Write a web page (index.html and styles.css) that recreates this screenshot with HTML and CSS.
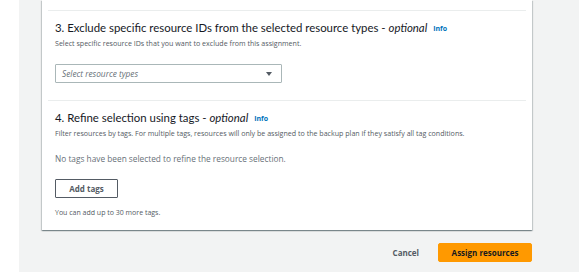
FILE: index.html
```html
<!DOCTYPE html>
<html lang="en">
<head>
<meta charset="UTF-8">
<meta name="viewport" content="width=device-width, initial-scale=1.0">
<title>Assign resources</title>
<link rel="stylesheet" href="styles.css">
</head>
<body>
<div class="nav"></div>

<div class="main">
  <div class="card">
    <div class="section">
      <h2>3. Exclude specific resource IDs from the selected resource types - <i>optional</i> <a href="#" class="info">Info</a></h2>
      <p class="desc">Select specific resource IDs that you want to exclude from this assignment.</p>
      <div class="select">
        <span>Select resource types</span>
        <span class="caret"></span>
      </div>
    </div>

    <div class="section last">
      <h2>4. Refine selection using tags - <i>optional</i> <a href="#" class="info">Info</a></h2>
      <p class="desc">Filter resources by tags. For multiple tags, resources will only be assigned to the backup plan if they satisfy all tag conditions.</p>
      <p class="empty">No tags have been selected to refine the resource selection.</p>
      <button class="btn">Add tags</button>
      <p class="hint">You can add up to 30 more tags.</p>
    </div>
  </div>

  <div class="actions">
    <a href="#" class="cancel">Cancel</a>
    <button class="btn primary">Assign resources</button>
  </div>
</div>
</body>
</html>
```

FILE: styles.css
```css
body {
  margin: 0;
  font-family: "Open Sans", Arial, sans-serif;
  color: #16191f;
  display: flex;
  min-height: 272px;
}
.nav {
  width: 19px;
  background-color: #fff;
}
.main {
  flex: 1;
  background-color: #f2f3f3;
  padding: 0 47px 0 23px;
}
.card {
  background-color: #fff;
  padding: 10px 6px 0 6px;
  box-shadow: 0 1px 1px 0 rgba(0, 28, 36, 0.3), 1px 1px 1px 0 rgba(0, 28, 36, 0.15), -1px 1px 1px 0 rgba(0, 28, 36, 0.15);
}
.section {
  border-top: 1px solid #eaeded;
  padding: 8px 7px 17px 7px;
}
.section.last {
  padding-bottom: 12px;
}
h2 {
  margin: 0;
  font-family: Lato, "Open Sans", sans-serif;
  font-size: 11.4px;
  font-weight: 400;
  line-height: 18px;
}
.info {
  font-family: "Open Sans", Arial, sans-serif;
  font-size: 7px;
  font-weight: 700;
  color: #0073bb;
  text-decoration: none;
  margin-left: 3px;
  vertical-align: 1px;
}
.desc {
  margin: 0;
  font-size: 7.1px;
  line-height: 10px;
  color: #545b64;
}
.select {
  margin-top: 16px;
  width: 227px;
  height: 19px;
  box-sizing: border-box;
  border: 1px solid #aab7b8;
  border-radius: 1px;
  display: flex;
  align-items: center;
  justify-content: space-between;
  padding: 0 6px;
  font-size: 8.3px;
  font-style: italic;
  color: #687078;
}
.caret {
  width: 0;
  height: 0;
  border-left: 3px solid transparent;
  border-right: 3px solid transparent;
  border-top: 4px solid #545b64;
  margin-right: 3px;
}
.empty {
  margin: 15px 0 0 0;
  font-size: 8.3px;
  line-height: 12px;
  color: #687078;
}
.btn {
  font-family: inherit;
  font-size: 8px;
  font-weight: 700;
  height: 19px;
  padding: 0 12px;
  background-color: #fff;
  border: 1px solid #545b64;
  border-radius: 1px;
  color: #545b64;
  cursor: pointer;
}
.section .btn {
  margin-top: 14px;
  width: 63px;
}
.hint {
  margin: 10px 0 0 0;
  font-size: 7px;
  line-height: 10px;
  color: #545b64;
}
.actions {
  display: flex;
  justify-content: flex-end;
  align-items: center;
  gap: 19px;
  margin-top: 13px;
}
.cancel {
  font-size: 8px;
  font-weight: 700;
  color: #545b64;
  text-decoration: none;
}
.btn.primary {
  width: 94px;
  background-color: #ff9900;
  border-color: #ff9900;
  color: #16191f;
  border-radius: 2px;
}
```
